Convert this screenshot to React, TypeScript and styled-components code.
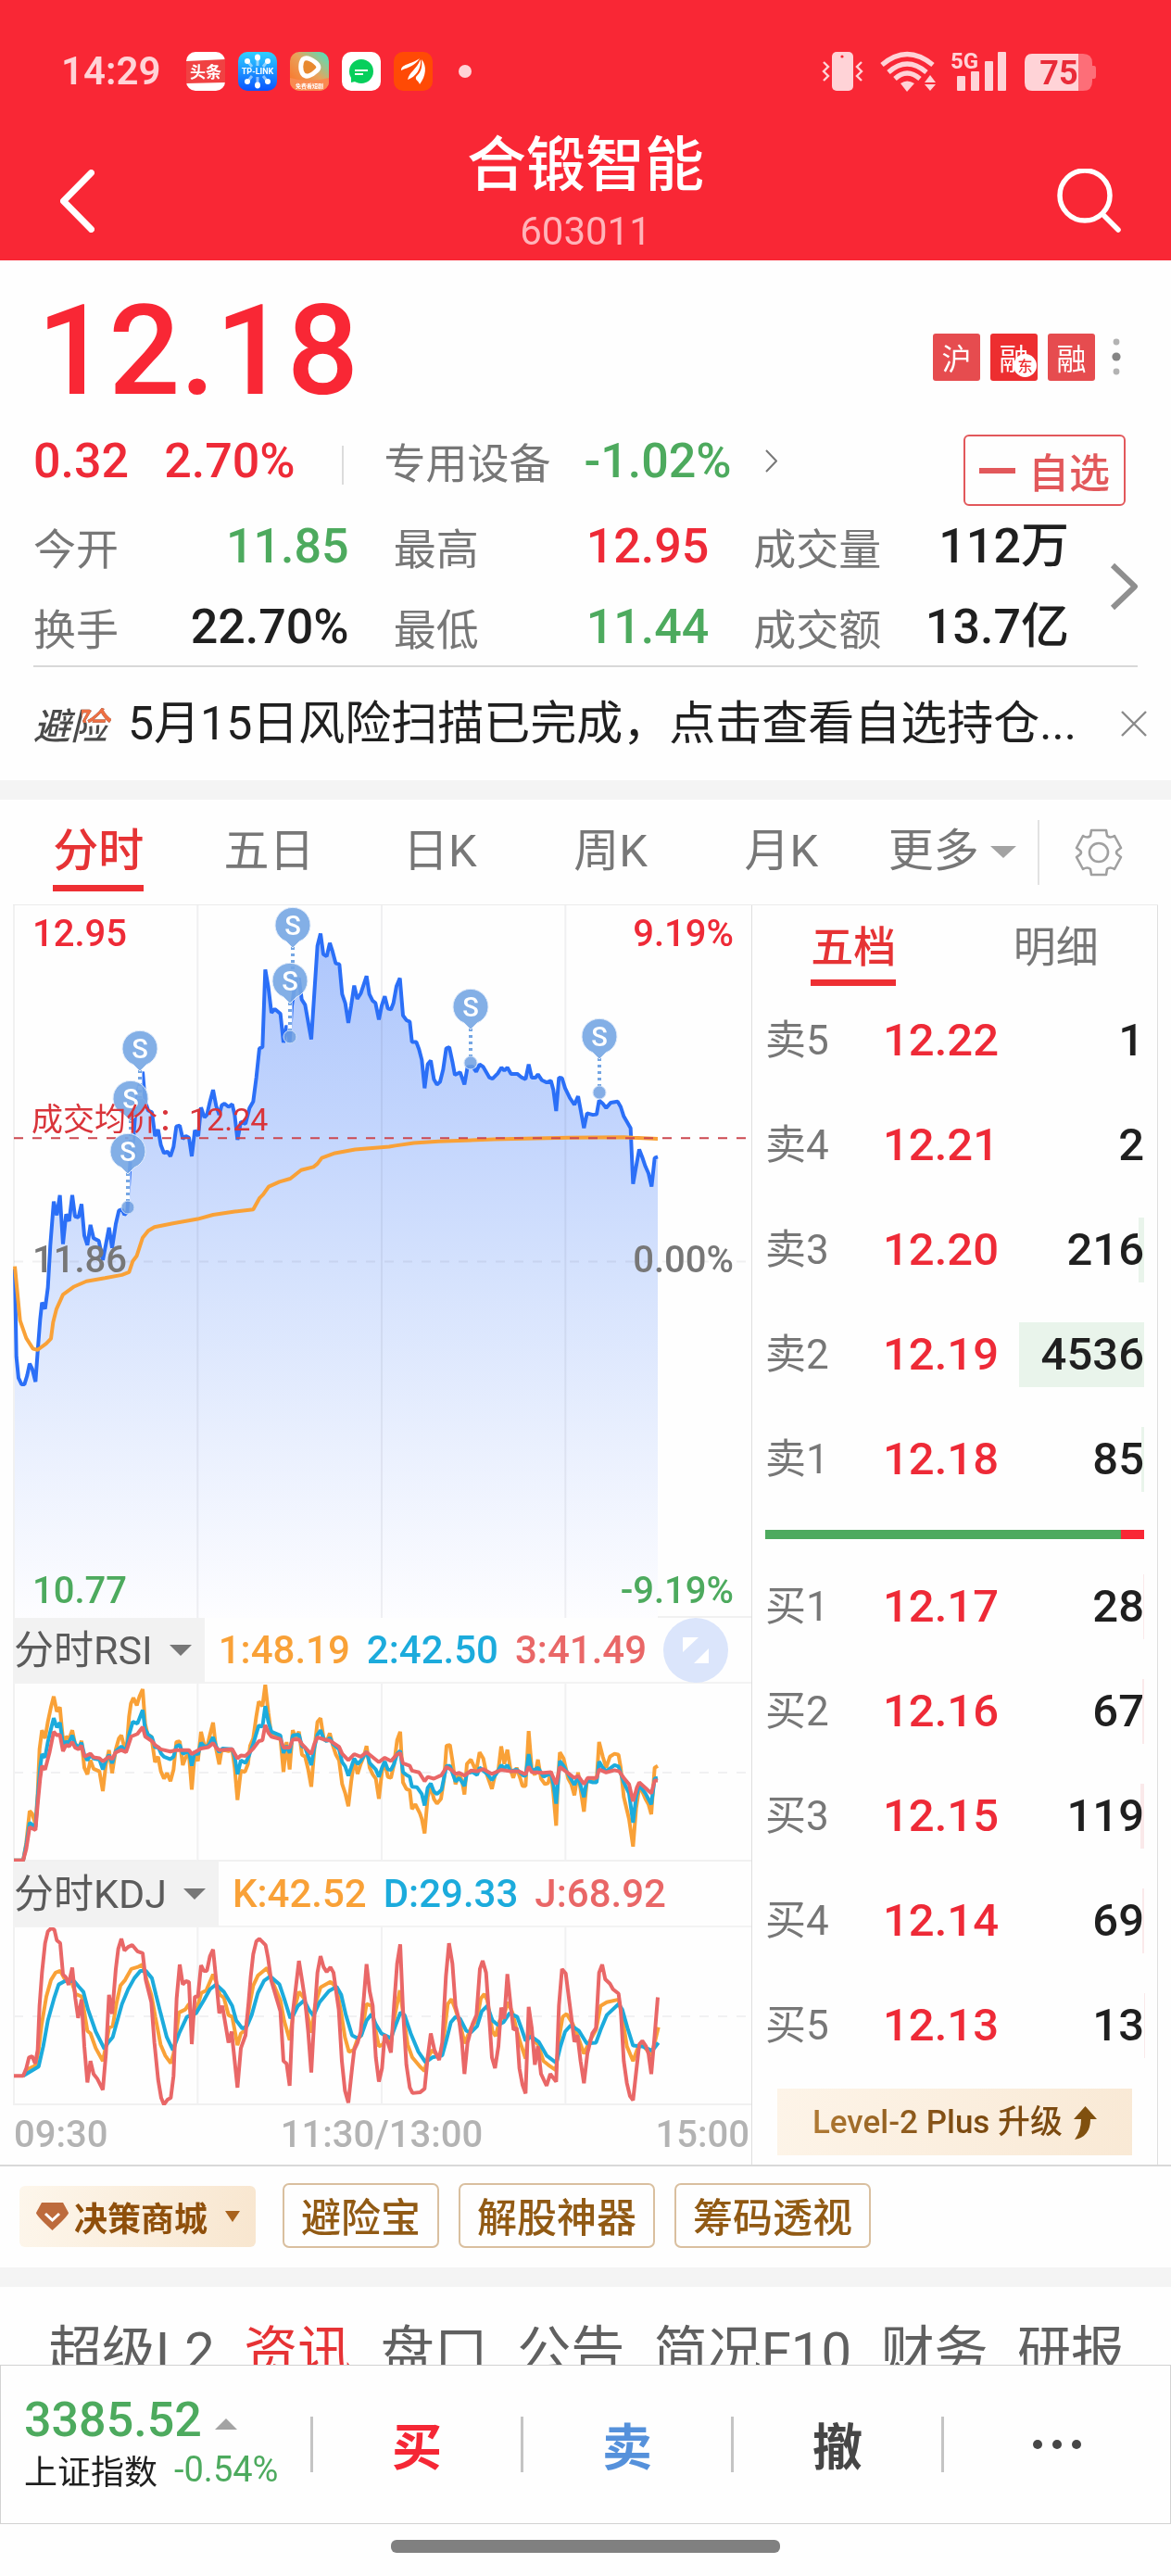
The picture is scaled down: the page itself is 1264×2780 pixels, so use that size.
import React from 'react';
import styled, { createGlobalStyle } from 'styled-components';

const CJK = '"Noto Sans CJK SC", sans-serif';
const NUM = 'Roboto, "Noto Sans CJK SC", sans-serif';

const c = {
  brand: '#f92735',
  red: '#ee2a37',
  green: '#4daa5e',
  ink: '#1f1f1f',
  grey: '#777777',
  line: '#dedede',
  orange: '#f9a137',
  cyan: '#1cabdc',
  rose: '#e96767',
  gold: '#915a14',
};

const GlobalStyle = createGlobalStyle`
  * { box-sizing: border-box; }
  body { margin: 0; background: #fefefe; font-family: ${CJK}; color: ${c.ink}; }
  button { font: inherit; color: inherit; background: none; border: 0; padding: 0; margin: 0; cursor: pointer; }
  svg { display: block; flex: none; }
`;

/* ---------- header ---------- */

const Header = styled.header`
  background: ${c.brand};
  color: #fff;
`;

const StatusBar = styled.div`
  display: flex;
  align-items: center;
  justify-content: space-between;
  padding: 48px 81px 0 66px;
  height: 106px;
`;

const StatusGroup = styled.div`
  display: flex;
  align-items: center;
  gap: 14px;
`;

const Clock = styled.span`
  font: 600 42px/58px ${NUM};
  color: #ffd3d7;
  margin-right: 14px;
`;

const MoreApps = styled.span`
  width: 14px;
  height: 14px;
  margin-left: 14px;
  border-radius: 50%;
  background: #ffd3d7;
`;

const NavBar = styled.div`
  display: grid;
  grid-template-columns: 160px 1fr 160px;
  align-items: end;
  padding-bottom: 6px;
  height: 175px;
`;

const NavButton = styled.button<{ $side: 'left' | 'right' }>`
  display: flex;
  align-items: center;
  justify-content: ${(p) => (p.$side === 'left' ? 'flex-start' : 'flex-end')};
  height: 116px;
  padding: 0 54px 0 65px;
`;

const TitleBlock = styled.div`
  text-align: center;
`;

const Title = styled.h1`
  margin: 0 0 14px;
  font: 500 64px/78px ${CJK};
`;

const Code = styled.div`
  font: 400 42px/50px ${NUM};
  color: #ffb3b9;
`;

/* ---------- quote ---------- */

const Quote = styled.section`
  padding-top: 28px;
`;

const PriceRow = styled.div`
  display: flex;
  align-items: center;
  justify-content: space-between;
  padding: 0 53px 0 40px;
  height: 140px;
`;

const Price = styled.div`
  font: 500 136px/140px ${NUM};
  color: ${c.brand};
`;

const Badges = styled.div`
  display: flex;
  align-items: center;
  gap: 11px;
  padding-top: 12px;
`;

const Badge = styled.span<{ $strong?: boolean }>`
  position: relative;
  width: 51px;
  height: 51px;
  border-radius: 3px;
  background: ${(p) => (p.$strong ? '#ed2e30' : '#e64c4f')};
  color: #fff;
  font: 400 32px/50px ${CJK};
  text-align: center;
`;

const BadgeDot = styled.span`
  position: absolute;
  right: 1px;
  bottom: 4px;
  width: 25px;
  height: 25px;
  border-radius: 50%;
  background: #fff;
  color: #ed2e30;
  font: 500 16px/24px ${CJK};
`;

const ChangeRow = styled.div`
  display: flex;
  align-items: center;
  height: 97px;
  padding: 0 49px 0 36px;
`;

const Figure = styled.span<{ $color: string }>`
  font: 500 52px/88px ${NUM};
  color: ${(p) => p.$color};
  white-space: nowrap;
`;

const Change = styled(Figure)`
  margin-right: 38px;
`;

const Rule = styled.span`
  width: 2px;
  height: 42px;
  background: #dcdcdc;
  margin: 8px 44px 0 12px;
`;

const Industry = styled.a`
  display: flex;
  align-items: center;
  gap: 36px;
  color: ${c.grey};
  text-decoration: none;
  font: 400 45px/88px ${CJK};
`;

const WatchButton = styled.button`
  display: flex;
  align-items: center;
  gap: 14px;
  align-self: flex-end;
  height: 77px;
  margin-left: auto;
  padding: 0 15px;
  border: 2px solid #e2585b;
  border-radius: 6px;
  color: #e2585b;
  font: 500 44px/70px ${CJK};
`;

const Minus = styled.span`
  width: 39px;
  height: 6px;
  background: #e2585b;
`;

const Stats = styled.div`
  display: grid;
  grid-template-columns: 1fr 1fr 1fr 26px;
  column-gap: 48px;
  align-items: center;
  margin: 0 36px;
  height: 174px;
  border-bottom: 2px solid #d8d8d8;
`;

const StatLine = styled.div`
  display: flex;
  justify-content: space-between;
  align-items: center;
  height: 87px;
`;

const StatLabel = styled.span`
  font: 400 46px/87px ${CJK};
  color: ${c.grey};
  white-space: nowrap;
`;

const MoreStats = styled.button`
  display: flex;
  justify-content: flex-end;
`;

const Notice = styled.div`
  display: flex;
  align-items: center;
  height: 122px;
  padding: 0 26px 0 36px;
`;

const NoticeLogo = styled.strong`
  padding-right: 4px;
  font: italic 500 40px/60px ${CJK};
  background: linear-gradient(#ee6f43 0 48%, transparent 48%) right / 32px 100% no-repeat, #4a4a4a;
  -webkit-background-clip: text;
  background-clip: text;
  color: transparent;
`;

const NoticeText = styled.a`
  flex: 1;
  margin-left: 18px;
  color: ${c.ink};
  text-decoration: none;
  font: 400 50px/72px ${NUM};
  white-space: nowrap;
`;

const CloseButton = styled.button``;

const Strip = styled.div`
  height: 21px;
  background: #f4f4f4;
`;

/* ---------- period tabs ---------- */

const PeriodBar = styled.nav`
  display: flex;
  align-items: center;
  padding-left: 14px;
  height: 113px;
`;

const PeriodTabs = styled.div`
  flex: 1;
  display: grid;
  grid-template-columns: repeat(6, 1fr);
  justify-items: center;
  padding-top: 6px;
`;

const Tab = styled.button<{ $on?: boolean; $size: number }>`
  display: flex;
  align-items: center;
  gap: 12px;
  height: 78px;
  color: ${(p) => (p.$on ? '#e63335' : c.grey)};
  border-bottom: 7px solid ${(p) => (p.$on ? '#ee2f33' : 'transparent')};
  font: ${(p) => (p.$on ? 500 : 400)} ${(p) => p.$size}px / 64px ${NUM};
  white-space: nowrap;
`;

const TabRule = styled.span`
  width: 2px;
  height: 70px;
  background: #e2e2e2;
`;

const GearButton = styled.button`
  display: flex;
  justify-content: center;
  width: 142px;
  padding-right: 14px;
`;

/* ---------- market panel ---------- */

const Market = styled.section`
  display: grid;
  grid-template-columns: 797fr 439fr;
  margin: 0 14px;
  border-top: 1px solid #ebebeb;
`;

const Charts = styled.div`
  min-width: 0;
`;

const Plot = styled.div<{ $h: number }>`
  position: relative;
  height: ${(p) => p.$h}px;
  border: 1px solid #f1f1f1;
  border-width: 0 0 2px 2px;
`;

const PlotSvg = styled.svg`
  position: absolute;
  left: -2px;
  top: 0;
  width: calc(100% + 2px);
  height: calc(100% + 2px);
`;

const Scale = styled.span<{ $top: number; $color: string; $right?: boolean }>`
  position: absolute;
  top: ${(p) => p.$top}px;
  ${(p) => (p.$right ? 'right: 19px' : 'left: 19px')};
  color: ${(p) => p.$color};
  font: 500 40px/50px ${NUM};
`;

const AverageLabel = styled.span`
  position: absolute;
  left: 18px;
  top: 206px;
  color: #d9343a;
  font: 400 34px/50px ${NUM};
`;

const IndicatorBar = styled.div`
  display: flex;
  align-items: center;
  height: 71px;
  border-bottom: 2px solid #f3f3f3;
  font: 500 42px/50px ${NUM};
`;

const IndicatorPicker = styled.button`
  display: flex;
  align-items: center;
  gap: 18px;
  height: 71px;
  padding: 0 14px 0 1px;
  margin-right: 15px;
  background: #f2f2f2;
  color: #5b5b5b;
  font: 400 43px/70px ${NUM};
  white-space: nowrap;
`;

const Reading = styled.span<{ $color: string }>`
  color: ${(p) => p.$color};
  margin-right: 18px;
  white-space: nowrap;
`;

const TimeAxis = styled.div`
  display: flex;
  justify-content: space-between;
  padding: 7px 2px 0 1px;
  height: 63px;
  color: #b3b3b3;
  font: 500 40px/50px ${NUM};
`;

/* ---------- order book ---------- */

const Book = styled.aside`
  border: solid ${c.line};
  border-width: 0 1px;
  padding: 0 14px 10px;
`;

const BookTabs = styled.div`
  display: grid;
  grid-template-columns: 1fr 1fr;
  justify-items: center;
  align-items: start;
  margin: 0 -14px;
  padding-top: 9px;
  height: 89px;
`;

const Levels = styled.table`
  width: 100%;
  table-layout: fixed;
  border-collapse: collapse;

  th, td { padding: 0; height: 113px; }
`;

const LevelName = styled.th`
  width: 127px;
  text-align: left;
  color: ${c.grey};
  font: 400 44px/70px ${NUM};
`;

const LevelPrice = styled.td`
  width: 147px;
  color: ${c.red};
  font: 500 49px/70px ${NUM};
`;

const LevelQty = styled.td`
  font: 500 49px/70px ${NUM};
  text-align: right;
`;

const QtyBox = styled.div`
  position: relative;
  height: 70px;
`;

const QtyBar = styled.span<{ $sell: boolean }>`
  position: absolute;
  top: 0;
  right: 0;
  height: 70px;
  background: ${(p) => (p.$sell ? '#e9f4eb' : '#fae9ea')};
`;

const QtyText = styled.span`
  position: relative;
`;

const Ratio = styled.div`
  display: flex;
  height: 10px;
  margin: 20px 0 16px;
  background: ${c.brand};
`;

const RatioSell = styled.span`
  background: ${c.green};
`;

const Upgrade = styled.a`
  display: flex;
  align-items: center;
  justify-content: center;
  gap: 12px;
  height: 72px;
  margin: 12px 13px 0;
  padding-top: 2px;
  background: linear-gradient(100deg, #fdf4e8, #f9e9d5);
  color: #80500f;
  font: 500 35px/60px ${NUM};
  text-decoration: none;
  white-space: nowrap;
`;

const GoldText = styled.span`
  background: linear-gradient(90deg, #b07a34, #7c4a10 60%);
  -webkit-background-clip: text;
  background-clip: text;
  color: transparent;
`;

/* ---------- tools ---------- */

const Tools = styled.div`
  display: flex;
  align-items: center;
  gap: 21px;
  height: 111px;
  padding: 0 21px 4px;
  border-top: 2px solid #d9d9d9;
`;

const MallButton = styled.button`
  display: flex;
  align-items: center;
  gap: 6px;
  height: 66px;
  padding: 0 17px 0 18px;
  margin: 2px 8px 0 0;
  border-radius: 6px;
  background: linear-gradient(100deg, #fdf6eb, #f8e6cf);
  color: #8f4f0b;
  font: 700 36px/60px ${CJK};

  svg:last-child { margin-left: 13px; }
`;

const ToolButton = styled.button`
  height: 70px;
  padding: 0 18px 2px;
  border: 2px solid #d9bf9f;
  border-radius: 7px;
  color: ${c.gold};
  font: 500 43px/62px ${CJK};
`;

const NewsTabs = styled.nav`
  display: flex;
  justify-content: space-between;
  height: 84px;
  overflow: hidden;
  padding: 28px 50px 0 52px;
`;

const NewsTab = styled.a<{ $on?: boolean }>`
  color: ${(p) => (p.$on ? '#e63335' : '#606060')};
  text-decoration: none;
  font: 400 58px/84px ${NUM};
  white-space: nowrap;
`;

/* ---------- footer ---------- */

const TradeBar = styled.footer`
  display: grid;
  grid-template-columns: 334fr 227fr 227fr 227fr 247fr;
  align-items: center;
  height: 172px;
  border: 1px solid #d2d2d2;
  background: #fefefe;
`;

const Index = styled.button`
  padding: 0 0 4px 25px;
  text-align: left;
`;

const IndexTop = styled.div`
  display: flex;
  align-items: center;
  gap: 14px;
  color: ${c.green};
  font: 500 52px/58px ${NUM};

  svg { margin-top: 8px; }
`;

const IndexBottom = styled.div`
  display: flex;
  align-items: center;
  gap: 18px;
  color: ${c.ink};
  font: 400 36px/48px ${CJK};
  white-space: nowrap;
`;

const IndexPct = styled.span`
  color: ${c.green};
  font: 400 38px/48px ${NUM};
`;

const Trade = styled.button<{ $color: string }>`
  display: flex;
  align-items: center;
  justify-content: center;
  height: 60px;
  border-left: 3px solid #c4c4c4;
  color: ${(p) => p.$color};
  font: 700 54px/60px ${CJK};
`;

const HomeArea = styled.div`
  display: flex;
  justify-content: center;
  padding-top: 17px;
  height: 56px;
`;

const HomeBar = styled.div`
  width: 420px;
  height: 14px;
  border-radius: 6px;
  background: #808080;
`;

/* ---------- drawings ---------- */

const Caret = ({ w, h, color, up }: { w: number; h: number; color: string; up?: boolean }) => (
  <svg width={w} height={h} viewBox={`0 0 ${w} ${h}`} aria-hidden>
    <path fill={color} d={up ? `M0 ${h}L${w / 2} 0L${w} ${h}z` : `M0 0H${w}L${w / 2} ${h}z`} />
  </svg>
);

const Arrow = ({ w, h, sw, color, left }: { w: number; h: number; sw: number; color: string; left?: boolean }) => (
  <svg width={w} height={h} viewBox={`0 0 ${w} ${h}`} aria-hidden>
    <path
      d={
        left
          ? `M${w - sw / 2} ${sw / 2}L${sw / 2} ${h / 2}L${w - sw / 2} ${h - sw / 2}`
          : `M${sw / 2} ${sw / 2}L${w - sw / 2} ${h / 2}L${sw / 2} ${h - sw / 2}`
      }
      fill="none"
      stroke={color}
      strokeWidth={sw}
      strokeLinecap={left ? 'round' : 'butt'}
      strokeLinejoin="round"
    />
  </svg>
);

const AppIcons = () => (
  <>
    <svg width="42" height="42" viewBox="0 0 42 42" aria-label="头条">
      <rect width="42" height="42" rx="10" fill="#fff" />
      <path d="M0 10L42 8V33L0 34z" fill="#f04142" />
      <text x="21" y="28" fontSize="17" fontWeight="700" textAnchor="middle" fill="#fff" fontFamily="Noto Sans CJK SC">头条</text>
    </svg>
    <svg width="42" height="42" viewBox="0 0 42 42" aria-label="TP-LINK">
      <defs>
        <linearGradient id="tp" x1="0" y1="0" x2="0" y2="1">
          <stop offset="0" stopColor="#2fd0ff" />
          <stop offset="1" stopColor="#0a55ff" />
        </linearGradient>
      </defs>
      <rect width="42" height="42" rx="10" fill="url(#tp)" />
      <g fill="#fff">
        <ellipse cx="21" cy="6" rx="3" ry="3.4" />
        <circle cx="10" cy="10" r="3" />
        <circle cx="32" cy="10" r="3" />
        <ellipse cx="21" cy="36" rx="3" ry="3.4" />
        <circle cx="10" cy="32" r="3" />
        <circle cx="32" cy="32" r="3" />
      </g>
      <path d="M21 8V15M11 11L15 16M31 11L27 16M21 34V27M11 31L15 26M31 31L27 26" stroke="#fff" strokeOpacity=".5" strokeWidth="3" />
      <text x="21" y="24" fontSize="9" fontWeight="700" textAnchor="middle" fill="#fff" fontFamily="Roboto">TP-LINK</text>
    </svg>
    <svg width="42" height="42" viewBox="0 0 42 42" aria-label="免费看短剧">
      <defs>
        <linearGradient id="dr" x1="0" y1="1" x2="1" y2="0">
          <stop offset="0" stopColor="#ff6a1e" />
          <stop offset=".55" stopColor="#e8a35c" />
          <stop offset="1" stopColor="#3fe8c8" />
        </linearGradient>
      </defs>
      <rect width="42" height="42" rx="10" fill="url(#dr)" />
      <path d="M0 28Q21 34 42 28V32A10 10 0 0 1 32 42H10A10 10 0 0 1 0 32z" fill="#f98a50" />
      <path d="M14 8C18 5 23 8 27 11C32 15 32 18 28 21C23 26 17 28 14 24C11 20 11 12 14 8z" fill="#e8892f" stroke="#fff" strokeWidth="5" />
      <text x="21" y="39" fontSize="6" fontWeight="700" textAnchor="middle" fill="#fff" fontFamily="Noto Sans CJK SC">免费看短剧</text>
    </svg>
    <svg width="42" height="42" viewBox="0 0 42 42" aria-hidden>
      <rect width="42" height="42" rx="10" fill="#fff" />
      <circle cx="21" cy="21" r="13" fill="#07cf5c" />
      <path d="M10 24V33L19 31z" fill="#07cf5c" />
      <path d="M14 20H28M14 24H23" stroke="#fff" strokeWidth="2" />
    </svg>
    <svg width="42" height="42" viewBox="0 0 42 42" aria-hidden>
      <rect width="42" height="42" rx="10" fill="#ff4a05" />
      <path d="M8 20C8 13 18 14 28 7C23 15 17 16 8 20z" fill="#fff" />
      <path d="M15 30C17 21 24 20 29 8C30 18 24 27 15 30z" fill="#fff" />
      <path d="M30 8C36 15 35 26 28 35C27 31 23 31 24 27C30 21 31 16 30 8z" fill="#fff" />
    </svg>
    <MoreApps />
  </>
);

const StatusIcons = () => (
  <svg width="296" height="58" viewBox="887 47 296 58" fill="#ffd3d7" aria-label="75%">
    <rect x="898" y="55" width="23" height="42" rx="5" />
    <circle cx="909" cy="60" r="1.6" fill={c.brand} />
    <path d="M889 66L894 71L889 76L894 81L889 86M930 66L925 71L930 76L925 81L930 86" fill="none" stroke="#ffd3d7" strokeWidth="2.4" />
    <g fill="none" stroke="#ffd3d7" strokeWidth="5.2">
      <path d="M952 69Q979 46 1007 69" />
      <path d="M959 77Q979 59 1000 77" />
      <path d="M966 84Q979 72 993 84" />
    </g>
    <path d="M972 89Q979 84 987 89L979 98z" />
    <path d="M998 88L1004 80L1010 88zM998 90H1010L1004 97z" />
    <text x="1026" y="73" fontSize="24" fontWeight="700" fontFamily="Roboto">5G</text>
    <rect x="1033" y="81" width="9" height="16" rx="1" />
    <rect x="1048" y="76" width="9" height="21" rx="1" />
    <rect x="1063" y="65" width="9" height="32" rx="1" />
    <rect x="1077" y="55" width="9" height="42" rx="1" />
    <path d="M1164 57H1169Q1179 57 1179 67V70H1181Q1183 70 1183 73V81Q1183 84 1181 84H1179V87Q1179 97 1169 97H1164z" fill="#fd6e78" />
    <path d="M1114 57H1164V97H1114Q1106 97 1106 88V66Q1106 57 1114 57z" />
    <text x="1143" y="90" fontSize="36" fontWeight="700" fontFamily="Roboto" fill="#e92b38" textAnchor="middle">75</text>
  </svg>
);

const Gear = () => (
  <svg width="52" height="52" viewBox="-26 -26 52 52" fill="none" stroke="#a0a0a0" strokeWidth="2.6" strokeLinejoin="round" aria-hidden>
    <circle r="10" />
    <path d="M-8 -24H8L9 -18Q12 -15 17 -18L24 -5L20 -2Q18 0 20 2L24 5L17 18Q12 15 9 18L8 24H-8L-9 18Q-12 15 -17 18L-24 5L-20 2Q-18 0 -20 -2L-24 -5L-17 -18Q-12 -15 -9 -18z" />
  </svg>
);

/* ---------- chart data: x and y pairs on each plot's own grid ---------- */

const PRICE =
  '48,905 53,1070 60,1110 70,1122 79,1122 88,1105 96,1083 104,1092 115,1117 122,1060 130,1000 136,968 146,980 155,940 163,860 174,778 184,804 194,766 204,858 214,802 224,815 234,766 243,806 254,808 264,783 273,842 283,860 293,822 303,847 320,852 333,888 343,858 353,827 363,865 375,820 385,795 395,793 403,803 412,798 418,740 423,690 432,660 440,600 450,560 462,534 470,590 480,607 492,610 502,655 512,643 521,672 531,687 542,684 552,693 562,675 571,637 582,635 592,660 602,655 612,658 621,693 631,644 642,655 651,601 662,620 670,615 680,590 690,568 700,598 710,615 718,597 727,594 740,600 752,595 760,615 769,662 780,628 795,632 808,602 820,590 830,545 840,490 850,488 859,342 869,375 879,423 890,416 908,425 918,479 928,447 938,478 945,410 955,370 968,358 977,398 988,408 1008,473 1018,385 1028,297 1038,274 1047,313 1058,317 1068,292 1077,308 1087,330 1099,332 1108,388 1118,405 1128,442 1137,410 1147,372 1157,397 1168,387 1187,354 1196,388 1206,400 1216,405 1227,436 1236,410 1246,392 1256,415 1266,417 1274,405 1284,373 1295,358 1305,428 1316,437 1327,440 1334,478 1348,478 1357,492 1366,512 1375,565 1385,520 1395,513 1405,548 1415,558 1425,553 1435,530 1445,490 1455,488 1465,515 1473,540 1490,535 1504,558 1514,525 1530,524 1542,534 1553,520 1565,525 1575,535 1585,545 1595,547 1612,537 1624,526 1633,532 1643,526 1655,538 1675,538 1690,545 1702,548 1712,520 1722,545 1734,545 1742,539 1755,550 1770,554 1784,551 1792,568 1801,608 1810,545 1820,546 1830,565 1845,583 1860,596 1872,580 1881,608 1891,640 1901,612 1920,615 1932,614 1940,588 1952,594 1963,602 1978,592 2000,590 2010,600 2020,618 2030,628 2042,640 2050,745 2060,712 2070,680 2080,695 2090,712 2100,725 2110,750 2120,696 2130,694';

const AVERAGE =
  '48,900 65,1002 85,1035 107,1055 122,1057 150,1045 165,1036 172,1005 183,980 204,953 240,938 280,928 340,922 395,916 418,911 430,890 443,880 462,846 480,833 500,826 560,819 640,811 690,803 760,797 820,793 840,772 852,765 870,750 905,741 940,735 975,719 1015,713 1028,707 1042,696 1085,687 1150,680 1260,675 1280,673 1340,668 1420,665 1600,661 1840,658 2020,657 2050,658 2130,660';

const RSI = [
  {
    color: c.orange,
    points:
      '45,703 75,703 85,655 96,568 104,575 115,605 122,520 128,400 136,348 146,370 155,325 165,285 174,256 184,297 194,285 200,340 206,390 214,365 224,372 234,348 243,385 254,400 264,377 273,450 283,468 293,430 303,453 322,460 333,514 343,440 353,402 363,465 375,400 385,370 393,362 403,395 410,400 418,310 424,275 432,260 443,280 452,255 462,236 470,330 478,360 490,365 502,435 512,420 521,460 531,480 541,465 552,487 562,455 571,380 582,378 592,443 602,420 612,415 621,510 631,410 641,432 651,352 662,390 670,395 680,360 690,327 700,400 710,441 718,400 740,405 752,400 760,450 769,538 780,458 793,462 803,440 810,390 820,370 830,310 838,270 850,282 859,224 869,300 879,365 890,358 908,370 918,462 928,380 938,455 948,348 958,370 968,352 978,415 988,420 998,455 1008,502 1018,400 1028,325 1038,315 1048,370 1058,378 1068,356 1078,390 1088,415 1098,430 1108,495 1118,520 1128,555 1137,490 1147,428 1158,467 1168,440 1178,420 1187,391 1197,450 1207,468 1217,480 1227,535 1237,460 1246,435 1256,475 1266,478 1276,440 1286,375 1296,352 1305,490 1316,508 1327,512 1334,563 1345,550 1360,575 1366,590 1375,629 1385,530 1395,500 1405,535 1415,548 1428,535 1438,480 1446,390 1457,388 1465,430 1475,495 1487,468 1496,485 1504,523 1512,440 1525,428 1542,460 1553,408 1565,425 1575,465 1593,508 1603,470 1614,455 1623,392 1633,440 1643,401 1653,455 1662,478 1673,450 1685,480 1692,500 1702,500 1712,350 1722,455 1732,470 1742,428 1752,480 1765,495 1775,492 1784,460 1792,520 1801,608 1807,480 1813,408 1825,425 1840,480 1850,495 1860,525 1872,463 1881,515 1891,570 1900,490 1918,480 1932,485 1940,380 1952,420 1963,450 1975,420 1990,412 2003,415 2010,450 2020,530 2037,590 2050,665 2060,560 2070,505 2080,515 2090,535 2100,550 2109,577 2120,450 2130,445',
  },
  {
    color: c.cyan,
    points:
      '45,703 75,703 85,660 96,600 115,612 122,530 130,450 136,413 146,422 155,380 165,345 174,315 184,340 194,327 204,385 214,380 224,380 234,362 243,385 254,395 264,382 273,415 283,430 293,415 303,425 322,428 333,455 343,430 353,415 363,438 375,405 393,392 408,405 418,360 430,325 445,330 462,293 470,345 480,360 492,367 502,395 512,393 522,412 531,420 552,427 562,420 571,392 582,388 592,412 612,405 621,445 631,405 641,415 651,382 662,393 675,390 690,367 700,392 710,408 720,398 752,400 760,420 769,468 780,430 795,437 805,420 820,385 838,335 850,338 859,282 869,325 879,352 908,362 918,410 928,390 938,410 948,362 968,360 978,392 988,395 1008,443 1018,395 1028,360 1038,348 1048,372 1058,378 1068,368 1078,385 1098,400 1108,435 1118,447 1128,472 1137,450 1147,425 1158,440 1168,432 1187,406 1197,437 1217,455 1227,475 1237,450 1246,433 1256,455 1266,456 1276,440 1286,412 1296,404 1305,462 1316,470 1327,475 1334,502 1350,503 1366,522 1375,553 1385,505 1395,493 1405,515 1415,522 1430,510 1446,445 1457,445 1475,488 1487,478 1504,500 1512,465 1530,462 1545,470 1553,450 1575,465 1593,484 1612,460 1623,443 1633,452 1643,443 1653,460 1673,455 1695,472 1702,472 1712,413 1722,460 1742,450 1760,475 1784,465 1792,495 1801,548 1813,432 1825,445 1840,468 1860,497 1872,475 1891,530 1900,485 1920,490 1932,490 1940,433 1952,450 1963,460 1990,443 2003,447 2012,470 2020,490 2037,520 2050,600 2060,530 2070,497 2090,520 2109,550 2120,480 2130,478',
  },
  {
    color: c.rose,
    points:
      '45,703 75,703 85,672 96,612 115,620 122,550 130,480 136,445 146,455 160,410 174,352 184,362 194,360 204,405 214,388 224,392 234,380 243,395 254,400 264,390 273,420 293,412 303,422 322,424 333,433 353,420 363,427 375,408 393,402 408,408 425,365 445,358 462,339 470,365 492,378 502,388 521,400 552,406 571,402 612,402 621,413 641,403 651,398 675,394 690,383 700,396 710,402 752,400 769,425 780,417 795,418 820,398 838,378 850,375 859,334 869,355 879,366 908,372 918,395 938,395 948,373 968,373 978,386 1008,413 1018,385 1028,367 1048,373 1068,376 1098,393 1108,412 1128,430 1147,413 1168,420 1187,408 1227,435 1246,423 1266,432 1284,415 1296,410 1305,438 1327,445 1334,458 1357,463 1375,487 1385,475 1405,480 1430,470 1446,448 1465,458 1475,467 1487,464 1504,472 1525,458 1545,460 1565,454 1593,467 1623,456 1653,460 1680,460 1702,468 1712,447 1722,462 1760,464 1784,462 1801,495 1813,448 1840,465 1860,478 1872,472 1891,495 1903,478 1932,478 1940,455 1963,463 1990,457 2005,460 2020,478 2037,495 2050,542 2062,505 2070,490 2090,505 2109,520 2120,485 2130,485',
  },
];

const KDJ = [
  {
    color: c.orange,
    points:
      '75,1290 90,1272 115,1262 125,1220 135,1150 150,1075 165,1030 180,1010 195,1005 210,1028 230,1030 245,1068 265,1075 283,1168 293,1175 310,1215 333,1250 345,1200 353,1160 365,1155 378,1090 390,1045 405,1030 425,1000 445,995 462,988 475,1030 490,1070 503,1130 520,1205 535,1235 553,1256 562,1230 580,1118 600,1110 612,1095 621,1140 640,1100 652,1065 668,1058 690,1015 700,1035 712,1070 725,1078 740,1125 752,1130 769,1207 780,1175 795,1165 810,1090 820,1045 835,1018 865,997 880,1030 908,1085 920,1140 938,1193 950,1120 968,1062 985,1080 1008,1173 1020,1100 1038,1050 1070,1035 1090,1050 1105,1120 1117,1185 1130,1225 1145,1220 1158,1190 1170,1180 1187,1095 1203,1100 1217,1170 1227,1210 1240,1205 1250,1185 1266,1200 1280,1120 1295,1058 1307,1130 1320,1205 1335,1240 1360,1265 1375,1277 1385,1240 1400,1220 1422,1240 1435,1200 1450,1095 1462,1082 1475,1110 1490,1150 1505,1202 1525,1160 1545,1135 1557,1080 1568,1068 1578,1085 1595,1170 1605,1182 1618,1140 1630,1130 1645,1090 1660,1120 1670,1155 1685,1200 1702,1243 1712,1160 1725,1190 1742,1205 1760,1250 1775,1260 1800,1275 1812,1180 1822,1130 1835,1122 1855,1150 1870,1180 1891,1230 1910,1195 1930,1165 1945,1100 1965,1090 2003,1083 2015,1130 2030,1210 2050,1250 2065,1215 2080,1205 2095,1220 2109,1235 2120,1200 2132,1158',
  },
  {
    color: c.cyan,
    points:
      '75,1290 95,1280 125,1265 140,1210 155,1140 175,1080 190,1042 210,1033 240,1033 255,1048 270,1062 285,1110 310,1170 338,1217 350,1200 365,1185 380,1140 395,1095 415,1055 435,1025 455,1005 472,1005 492,1025 505,1070 520,1120 540,1185 560,1220 580,1175 605,1130 635,1120 660,1085 680,1055 700,1042 725,1062 752,1100 765,1140 785,1162 800,1155 815,1125 835,1065 855,1032 875,1020 905,1042 920,1080 940,1133 950,1125 965,1100 985,1085 1000,1110 1015,1127 1035,1090 1065,1060 1090,1048 1105,1070 1120,1125 1140,1180 1158,1188 1170,1180 1187,1140 1203,1123 1217,1150 1235,1175 1266,1188 1280,1155 1297,1118 1310,1125 1330,1175 1355,1225 1378,1253 1400,1240 1432,1235 1445,1195 1460,1145 1475,1130 1490,1135 1510,1168 1525,1172 1545,1155 1560,1115 1578,1100 1595,1140 1612,1152 1630,1145 1650,1120 1675,1130 1690,1165 1702,1195 1720,1183 1745,1198 1770,1235 1802,1255 1815,1210 1830,1170 1848,1153 1875,1168 1900,1202 1930,1200 1945,1165 1965,1125 2003,1095 2015,1110 2032,1160 2050,1208 2080,1210 2112,1222 2132,1200',
  },
  {
    color: c.rose,
    points:
      '45,1290 75,1290 85,1270 94,1240 104,1237 114,1257 122,1220 128,1100 136,1010 146,930 155,898 165,890 176,893 184,922 195,930 204,1015 213,1022 222,1043 234,996 244,1080 253,1133 264,1083 273,1210 283,1308 293,1250 303,1285 315,1298 333,1328 343,1230 353,1070 363,1122 375,1000 383,945 393,918 403,950 415,940 428,935 445,952 462,957 472,1030 490,1090 500,1200 512,1300 522,1350 531,1368 542,1355 553,1350 562,1290 572,1080 582,988 592,1042 602,1033 612,1035 621,1204 631,1075 641,1075 651,990 660,1005 670,1005 680,965 690,947 700,1030 710,1120 720,1100 740,1200 750,1170 769,1322 780,1215 795,1180 805,1090 812,1020 820,960 830,925 840,918 860,935 868,970 878,1030 908,1115 918,1250 928,1257 938,1317 948,1120 958,1050 968,978 978,1030 988,1085 998,1170 1008,1281 1018,1130 1028,1010 1038,965 1048,995 1058,1008 1070,995 1080,1010 1090,1070 1097,1110 1107,1250 1117,1330 1128,1363 1140,1270 1147,1220 1158,1200 1168,1170 1178,1080 1187,987 1197,1060 1207,1100 1217,1240 1227,1306 1237,1270 1246,1178 1256,1200 1266,1227 1276,1100 1286,985 1296,933 1305,1110 1316,1260 1327,1322 1336,1337 1360,1335 1375,1325 1385,1240 1395,1175 1407,1220 1422,1247 1432,1200 1444,1020 1454,930 1465,985 1475,1100 1487,1140 1496,1200 1504,1285 1514,1200 1530,1150 1543,1125 1554,1000 1563,978 1574,1010 1585,1140 1593,1240 1603,1269 1614,1210 1623,1105 1633,1135 1643,1014 1655,1110 1663,1165 1673,1160 1682,1270 1692,1315 1702,1338 1712,1103 1722,1160 1732,1260 1742,1210 1752,1285 1770,1317 1782,1285 1801,1306 1810,1100 1820,1000 1832,1012 1850,1130 1860,1198 1870,1180 1880,1250 1891,1310 1902,1230 1918,1175 1930,1160 1940,1010 1950,988 1960,1028 1975,1040 1985,1055 2003,1067 2010,1110 2020,1250 2030,1310 2040,1345 2050,1356 2060,1280 2070,1205 2080,1195 2092,1210 2100,1230 2109,1285 2120,1180 2130,1077',
  },
];

const SELL_MARKS = [
  { x: 151, y: 1132 },
  { x: 141, y: 1186 },
  { x: 138, y: 1243 },
  { x: 316, y: 999 },
  { x: 313, y: 1059 },
  { x: 508, y: 1087 },
  { x: 647, y: 1119 },
];

const Grid = ({ top, bottom, mid }: { top: number; bottom: number; mid: number }) => (
  <g fill="none" stroke="#f1f1f2" strokeWidth="2">
    {[640, 1236, 1831].map((x) => (
      <path key={x} d={`M${x} ${top}V${bottom}`} vectorEffect="non-scaling-stroke" />
    ))}
    <path d={`M45 ${mid}H2415`} strokeDasharray="10 10" vectorEffect="non-scaling-stroke" />
  </g>
);

const Line = ({ points, color }: { points: string; color: string }) => (
  <polyline
    points={points}
    fill="none"
    stroke={color}
    strokeWidth="4"
    strokeLinejoin="bevel"
    vectorEffect="non-scaling-stroke"
  />
);

const Blend = styled.g`
  mix-blend-mode: multiply;
`;

const PriceChart = () => (
  <>
    <PlotSvg viewBox="42 221 2391 1340" preserveAspectRatio="none" role="img" aria-label="分时走势">
      <defs>
        <linearGradient id="area" gradientUnits="userSpaceOnUse" x1="0" y1="270" x2="0" y2="1561">
          <stop offset="0" stopColor="#adc6fc" />
          <stop offset=".3" stopColor="#c4d6fd" />
          <stop offset=".5" stopColor="#d5e2fd" />
          <stop offset=".75" stopColor="#eaf0fe" />
          <stop offset="1" stopColor="#fdfdff" />
        </linearGradient>
      </defs>
      <polygon points={`${PRICE} 2130,1561 48,1561`} fill="url(#area)" />
      <Blend>
        <Grid top={221} bottom={1561} mid={891} />
      </Blend>
      <Line points={PRICE} color="#2b6ff7" />
      <Line points={AVERAGE} color={c.orange} />
      <path d="M45 659H2415" stroke="#cc4850" strokeWidth="2" strokeDasharray="10 10" vectorEffect="non-scaling-stroke" />
    </PlotSvg>
    <PlotSvg viewBox="14 977 797 769" aria-hidden>
      {SELL_MARKS.map(({ x, y }) => (
        <g key={`${x}-${y}`}>
          <path d={`M${x} ${y + 22}V${y + 54}`} stroke="#fff" strokeWidth="5" />
          <path d={`M${x} ${y + 23}V${y + 54}`} stroke="#75a6e3" strokeWidth="4" strokeDasharray="3 4" />
          <circle cx={x} cy={y + 60} r="7" fill="#6f9fe0" fillOpacity=".85" stroke="#cfe0f8" strokeWidth="1" />
          <path
            d={`M${x} ${y + 24}L${x - 7} ${y + 17}A19 19 0 1 1 ${x + 7} ${y + 17}z`}
            fill="#75a6e3"
            fillOpacity=".9"
            stroke="#e3edfb"
            strokeWidth="1"
          />
          <text x={x} y={y + 10} fontSize="29" fontWeight="500" fontFamily="Roboto" textAnchor="middle" fill="#fff">
            S
          </text>
        </g>
      ))}
    </PlotSvg>
  </>
);

const IndicatorChart = ({ top, bottom, series, name }: { top: number; bottom: number; series: typeof RSI; name: string }) => (
  <PlotSvg viewBox={`42 ${top} 2391 ${bottom - top}`} preserveAspectRatio="none" role="img" aria-label={name}>
    <Grid top={top} bottom={bottom} mid={(top + bottom) / 2} />
    {series.map((s) => (
      <Line key={s.color} points={s.points} color={s.color} />
    ))}
  </PlotSvg>
);

/* ---------- page data ---------- */

const STATS = [
  [
    { label: '今开', value: '11.85', color: c.green },
    { label: '换手', value: '22.70%', color: c.ink },
  ],
  [
    { label: '最高', value: '12.95', color: c.red },
    { label: '最低', value: '11.44', color: c.green },
  ],
  [
    { label: '成交量', value: '112万', color: c.ink },
    { label: '成交额', value: '13.7亿', color: c.ink },
  ],
];

type Level = [name: string, price: string, qty: number];

const SELLS: Level[] = [
  ['卖5', '12.22', 1],
  ['卖4', '12.21', 2],
  ['卖3', '12.20', 216],
  ['卖2', '12.19', 4536],
  ['卖1', '12.18', 85],
];

const BUYS: Level[] = [
  ['买1', '12.17', 28],
  ['买2', '12.16', 67],
  ['买3', '12.15', 119],
  ['买4', '12.14', 69],
  ['买5', '12.13', 13],
];

const MAX_QTY = 4536;

const LevelTable = ({ levels, sell }: { levels: Level[]; sell: boolean }) => (
  <Levels>
    <tbody>
      {levels.map(([name, price, qty]) => (
        <tr key={name}>
          <LevelName scope="row">{name}</LevelName>
          <LevelPrice>{price}</LevelPrice>
          <LevelQty>
            <QtyBox>
              <QtyBar $sell={sell} style={{ width: `${(qty / MAX_QTY) * 100}%` }} />
              <QtyText>{qty}</QtyText>
            </QtyBox>
          </LevelQty>
        </tr>
      ))}
    </tbody>
  </Levels>
);

const NEWS = ['超级L2', '资讯', '盘口', '公告', '简况F10', '财务', '研报'];

export default function App() {
  return (
    <>
      <GlobalStyle />
      <Header>
        <StatusBar>
          <StatusGroup>
            <Clock>14:29</Clock>
            <AppIcons />
          </StatusGroup>
          <StatusIcons />
        </StatusBar>
        <NavBar>
          <NavButton $side="left" aria-label="返回">
            <Arrow w={37} h={68} sw={7} color="#fff" left />
          </NavButton>
          <TitleBlock>
            <Title>合锻智能</Title>
            <Code>603011</Code>
          </TitleBlock>
          <NavButton $side="right" aria-label="搜索">
            <svg width="70" height="70" viewBox="0 0 70 70" fill="none" stroke="#fff" strokeWidth="5.5" strokeLinecap="round">
              <circle cx="31" cy="29" r="27" />
              <path d="M50 49L67 66" />
            </svg>
          </NavButton>
        </NavBar>
      </Header>

      <main>
        <Quote>
          <PriceRow>
            <Price>12.18</Price>
            <Badges>
              <Badge>沪</Badge>
              <Badge $strong>
                融<BadgeDot>东</BadgeDot>
              </Badge>
              <Badge>融</Badge>
              <svg width="18" height="42" viewBox="0 0 18 42" aria-hidden>
                <circle cx="12" cy="5" r="3.4" fill="#b3b3b3" />
                <circle cx="12" cy="21" r="4.6" fill="#858585" />
                <circle cx="12" cy="37" r="3.4" fill="#b3b3b3" />
              </svg>
            </Badges>
          </PriceRow>
          <ChangeRow>
            <Change $color={c.red}>0.32</Change>
            <Change $color={c.red}>2.70%</Change>
            <Rule />
            <Industry href="#industry">
              <span>专用设备</span>
              <Figure $color={c.green}>-1.02%</Figure>
              <Arrow w={13} h={25} sw={2} color="#777" />
            </Industry>
            <WatchButton>
              <Minus />
              自选
            </WatchButton>
          </ChangeRow>
          <Stats>
            {STATS.map((col) => (
              <div key={col[0].label}>
                {col.map((s) => (
                  <StatLine key={s.label}>
                    <StatLabel>{s.label}</StatLabel>
                    <Figure $color={s.color}>{s.value}</Figure>
                  </StatLine>
                ))}
              </div>
            ))}
            <MoreStats aria-label="更多行情">
              <Arrow w={30} h={52} sw={6} color="#8f8f8f" />
            </MoreStats>
          </Stats>
          <Notice>
            <NoticeLogo>避险</NoticeLogo>
            <NoticeText href="#risk">5月15日风险扫描已完成，点击查看自选持仓...</NoticeText>
            <CloseButton aria-label="关闭">
              <svg width="28" height="28" viewBox="0 0 28 28" stroke="#8a8a8a" strokeWidth="2.4">
                <path d="M1 1L27 27M27 1L1 27" />
              </svg>
            </CloseButton>
          </Notice>
        </Quote>

        <Strip />

        <PeriodBar>
          <PeriodTabs>
            <Tab $on $size={49}>分时</Tab>
            <Tab $size={49}>五日</Tab>
            <Tab $size={49}>日K</Tab>
            <Tab $size={49}>周K</Tab>
            <Tab $size={49}>月K</Tab>
            <Tab $size={49}>
              更多
              <Caret w={28} h={13} color="#a3a3a3" />
            </Tab>
          </PeriodTabs>
          <TabRule />
          <GearButton aria-label="设置">
            <Gear />
          </GearButton>
        </PeriodBar>

        <Market>
          <Charts>
            <Plot $h={769}>
              <PriceChart />
              <Scale $top={6} $color={c.red}>12.95</Scale>
              <Scale $top={6} $color={c.red} $right>9.19%</Scale>
              <AverageLabel>成交均价：12.24</AverageLabel>
              <Scale $top={358} $color={c.grey}>11.86</Scale>
              <Scale $top={358} $color={c.grey} $right>0.00%</Scale>
              <Scale $top={715} $color={c.green}>10.77</Scale>
              <Scale $top={715} $color={c.green} $right>-9.19%</Scale>
            </Plot>
            <IndicatorBar>
              <IndicatorPicker aria-haspopup="listbox">
                分时RSI
                <Caret w={24} h={12} color="#777" />
              </IndicatorPicker>
              <Reading $color={c.orange}>1:48.19</Reading>
              <Reading $color={c.cyan}>2:42.50</Reading>
              <Reading $color={c.rose}>3:41.49</Reading>
              <button aria-label="展开">
                <svg width="70" height="70" viewBox="0 0 70 70">
                  <circle cx="35" cy="35" r="35" fill="#dbe5fb" />
                  <path d="M21 21H38L21 37zM49 33V49H33z" fill="#fff" />
                </svg>
              </button>
            </IndicatorBar>
            <Plot $h={192}>
              <IndicatorChart top={221} bottom={706} series={RSI} name="RSI" />
            </Plot>
            <IndicatorBar>
              <IndicatorPicker aria-haspopup="listbox">
                分时KDJ
                <Caret w={24} h={12} color="#777" />
              </IndicatorPicker>
              <Reading $color={c.orange}>K:42.52</Reading>
              <Reading $color={c.cyan}>D:29.33</Reading>
              <Reading $color={c.rose}>J:68.92</Reading>
            </IndicatorBar>
            <Plot $h={192}>
              <IndicatorChart top={887} bottom={1370} series={KDJ} name="KDJ" />
            </Plot>
            <TimeAxis>
              <span>09:30</span>
              <span>11:30/13:00</span>
              <span>15:00</span>
            </TimeAxis>
          </Charts>

          <Book>
            <BookTabs>
              <Tab $on $size={46}>五档</Tab>
              <Tab $size={46}>明细</Tab>
            </BookTabs>
            <LevelTable levels={SELLS} sell />
            <Ratio>
              <RatioSell style={{ width: '94%' }} />
            </Ratio>
            <LevelTable levels={BUYS} sell={false} />
            <Upgrade href="#level2">
              <GoldText>Level-2 Plus 升级</GoldText>
              <svg width="25" height="36" viewBox="0 0 25 36" fill="#80500f" aria-hidden>
                <path d="M12.500 0L25 14H18Q18 33 1 36Q8 27 8 14H0z" />
              </svg>
            </Upgrade>
          </Book>
        </Market>

        <Tools>
          <MallButton>
            <svg width="35" height="30" viewBox="0 0 35 30" aria-hidden>
              <path d="M6 0H29L35 11Q35 14 17.500 30Q0 14 0 11z" fill="#bd6b3c" />
              <path d="M10 12L17.500 19L25 12" fill="none" stroke="#fff" strokeWidth="3" />
            </svg>
            决策商城
            <Caret w={16} h={12} color="#a9621c" />
          </MallButton>
          <ToolButton>避险宝</ToolButton>
          <ToolButton>解股神器</ToolButton>
          <ToolButton>筹码透视</ToolButton>
        </Tools>

        <Strip />

        <NewsTabs>
          {NEWS.map((n) => (
            <NewsTab key={n} href="#news" $on={n === '资讯'}>
              {n}
            </NewsTab>
          ))}
        </NewsTabs>
      </main>

      <TradeBar>
        <Index>
          <IndexTop>
            3385.52
            <Caret w={24} h={12} color="#a3a3a3" up />
          </IndexTop>
          <IndexBottom>
            上证指数
            <IndexPct>-0.54%</IndexPct>
          </IndexBottom>
        </Index>
        <Trade $color="#f52735">买</Trade>
        <Trade $color="#5591db">卖</Trade>
        <Trade $color="#464646">撤</Trade>
        <Trade $color="#464646" aria-label="更多">
          <svg width="54" height="12" viewBox="0 0 54 12" fill="#464646">
            <circle cx="6" cy="6" r="5" />
            <circle cx="27" cy="6" r="5" />
            <circle cx="48" cy="6" r="5" />
          </svg>
        </Trade>
      </TradeBar>
      <HomeArea>
        <HomeBar />
      </HomeArea>
    </>
  );
}
